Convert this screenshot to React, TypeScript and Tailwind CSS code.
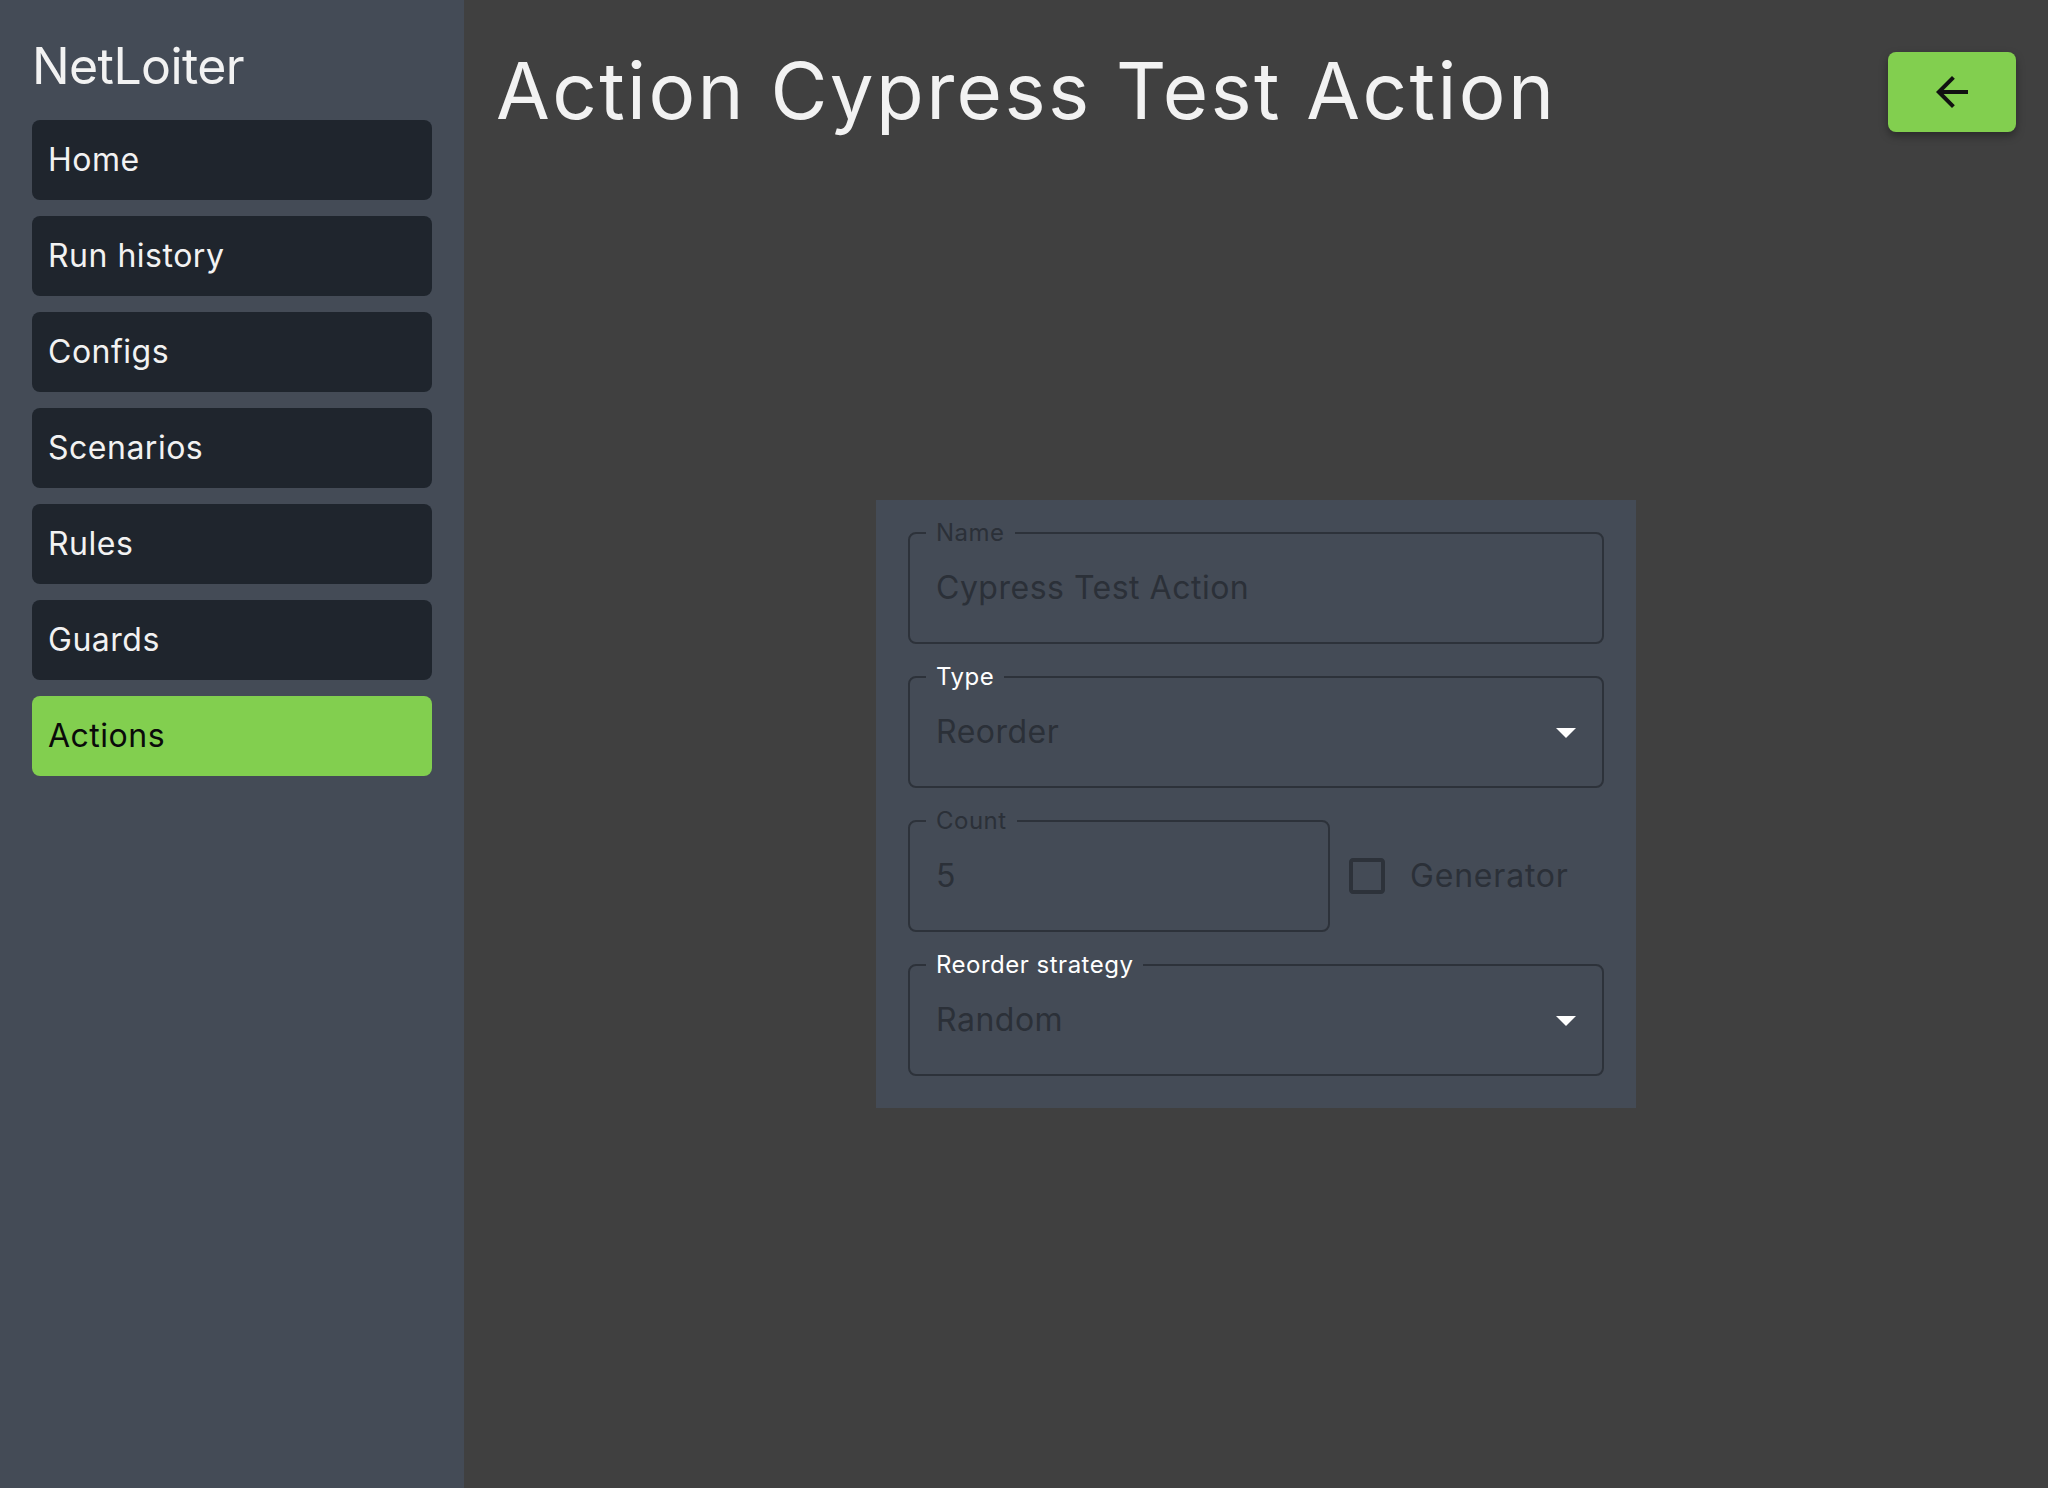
import React from 'react';

const navItems = ['Home', 'Run history', 'Configs', 'Scenarios', 'Rules', 'Guards', 'Actions'];

function ArrowDropDown() {
  return (
    <svg width="48" height="48" viewBox="0 0 24 24" className="shrink-0">
      <path d="M7 10l5 5 5-5z" fill="#ffffff" />
    </svg>
  );
}

interface FieldProps {
  label: string;
  value: string;
  labelActive?: boolean;
  select?: boolean;
  className?: string;
}

function OutlinedField({ label, value, labelActive, select, className = '' }: FieldProps) {
  return (
    <div
      className={`relative flex h-[112px] items-center justify-between rounded-[8px] border-2 border-[#2d323a] pl-[26px] pr-[12px] ${className}`}
    >
      <span
        className={`absolute left-[16px] top-[-13px] bg-[#444b56] px-[10px] text-[24px] leading-[24px] tracking-[0.5px] ${
          labelActive ? 'text-[#ffffff]' : 'text-[#2b3038]'
        }`}
      >
        {label}
      </span>
      <span className="text-[32px] leading-[40px] tracking-[0.5px] text-[#2b3038]">{value}</span>
      {select && <ArrowDropDown />}
    </div>
  );
}

export default function App() {
  return (
    <div className="flex h-[1488px] w-[2048px] font-['Inter',sans-serif] text-[#f2f2f2]">
      <aside className="w-[464px] shrink-0 bg-[#444b56] px-8">
        <div className="mt-[36px] text-[50px] leading-[60px] tracking-[-0.6px]">NetLoiter</div>
        <nav className="mt-[24px] flex flex-col gap-4">
          {navItems.map((item) => (
            <div
              key={item}
              className={`flex h-[80px] items-center rounded-[8px] px-4 text-[32px] tracking-[0.5px] ${
                item === 'Actions' ? 'bg-[#82cf4f] text-[#0a0a0a]' : 'bg-[#1f252d]'
              }`}
            >
              {item}
            </div>
          ))}
        </nav>
      </aside>

      <main className="flex flex-1 flex-col bg-[#404040]">
        <header className="flex items-start justify-between px-8 pt-[44px]">
          <h1 className="text-[78px] leading-[94px] tracking-[2.4px]">Action Cypress Test Action</h1>
          <button className="mt-[8px] flex h-[80px] w-[128px] items-center justify-center rounded-[8px] bg-[#82cf4f] shadow-[0_4px_8px_rgba(0,0,0,0.35)]">
            <svg width="48" height="48" viewBox="0 0 24 24">
              <path d="M20 11H7.83l5.59-5.59L12 4l-8 8 8 8 1.41-1.41L7.83 13H20v-2z" fill="#111111" />
            </svg>
          </button>
        </header>

        <div className="flex flex-1 items-center justify-center pb-[18px]">
          <div className="flex w-[760px] flex-col gap-8 bg-[#444b56] p-8">
            <OutlinedField label="Name" value="Cypress Test Action" />
            <OutlinedField label="Type" value="Reorder" labelActive select />
            <div className="flex items-center">
              <OutlinedField label="Count" value="5" className="w-[422px]" />
              <svg width="48" height="48" viewBox="0 0 24 24" className="ml-[13px]">
                <path
                  d="M19 5v14H5V5h14m0-2H5c-1.11 0-2 .9-2 2v14c0 1.1.89 2 2 2h14c1.1 0 2-.9 2-2V5c0-1.1-.9-2-2-2z"
                  fill="#2d323a"
                />
              </svg>
              <span className="ml-[19px] text-[32px] leading-[40px] tracking-[0.8px] text-[#2b3038]">Generator</span>
            </div>
            <OutlinedField label="Reorder strategy" value="Random" labelActive select />
          </div>
        </div>
      </main>
    </div>
  );
}
